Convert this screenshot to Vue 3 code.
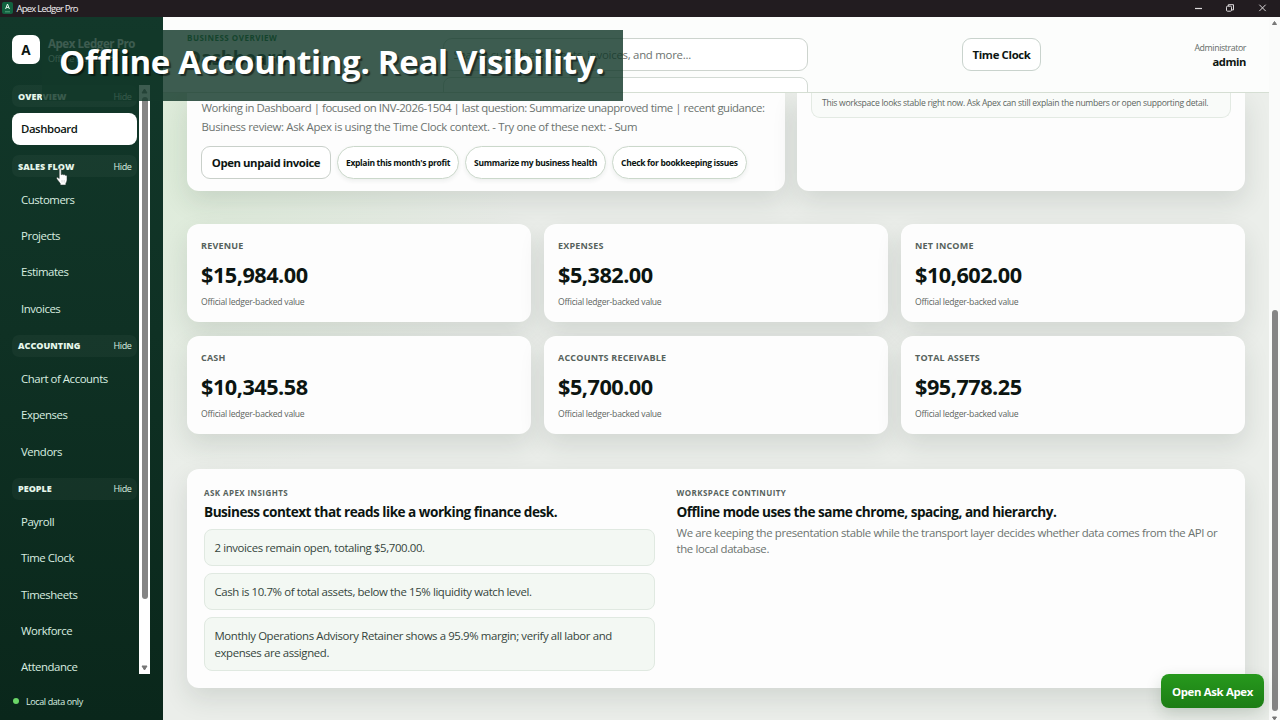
<script setup>
const groups = [
  { name: 'Overview', items: ['Dashboard'] },
  { name: 'Sales Flow', items: ['Customers', 'Projects', 'Estimates', 'Invoices'] },
  { name: 'Accounting', items: ['Chart of Accounts', 'Expenses', 'Vendors'] },
  { name: 'People', items: ['Payroll', 'Time Clock', 'Timesheets', 'Workforce', 'Attendance'] },
]
const prompts = ["Explain this month's profit", 'Summarize my business health', 'Check for bookkeeping issues']
const metrics = [
  { label: 'Revenue', value: '$15,984.00' },
  { label: 'Expenses', value: '$5,382.00' },
  { label: 'Net income', value: '$10,602.00' },
  { label: 'Cash', value: '$10,345.58' },
  { label: 'Accounts receivable', value: '$5,700.00' },
  { label: 'Total assets', value: '$95,778.25' },
]
const insights = [
  '2 invoices remain open, totaling $5,700.00.',
  'Cash is 10.7% of total assets, below the 15% liquidity watch level.',
  'Monthly Operations Advisory Retainer shows a 95.9% margin; verify all labor and expenses are assigned.',
]
</script>

<template>
  <div class="window">
    <div class="titlebar">
      <svg class="app-icon" viewBox="0 0 11 12">
        <rect width="11" height="12" rx="2" fill="#12613f" />
        <path d="M3.6 7 5.5 2l1.9 5M4.2 5.4h2.6" fill="none" stroke="#e8f5ee" stroke-width="1" />
        <path d="M3 9.8h5" stroke="#55a07d" stroke-width="1" />
      </svg>
      <span class="app-name">Apex Ledger Pro</span>
      <svg class="controls" viewBox="0 0 76 12" fill="none" stroke="#dedbdd">
        <path d="M2 6.500h7" stroke-width="1.2" />
        <rect x="33.500" y="4.2" width="5" height="5" rx="1" />
        <path d="M35.300 4V2.700h5.200v5.200h-1.700" />
        <path d="m66.300 2.700 6.400 6.400m0-6.400-6.400 6.400" />
      </svg>
    </div>

    <div class="body">
      <aside class="sidebar">
        <div class="brand">
          <div class="tile">A</div>
          <div>
            <div class="brand-name">Apex Ledger Pro</div>
            <div class="brand-sub">Offline workspace</div>
          </div>
        </div>
        <div class="nav-wrap">
          <nav>
            <section v-for="g in groups" :key="g.name">
              <header><b>{{ g.name }}</b><span>Hide</span></header>
              <a v-for="i in g.items" :key="i" :class="{ active: i === 'Dashboard' }">{{ i }}</a>
            </section>
          </nav>
          <div class="nav-scroll">
            <svg viewBox="0 0 11 12"><path d="M3 8h5L5.5 4z" fill="#777" stroke="#777" /></svg>
            <i></i>
            <svg viewBox="0 0 11 12"><path d="M3 4h5L5.5 8z" fill="#777" stroke="#777" /></svg>
          </div>
        </div>
        <div class="status"><i></i>Local data only</div>
      </aside>

      <main>
        <div class="topbar">
          <div class="heading">
            <div class="overline">Business overview</div>
            <h1>Dashboard</h1>
          </div>
          <div class="search-col">
            <div class="search">Search customers, clients, invoices, and more...</div>
            <div class="dropdown"></div>
          </div>
          <button class="clock">Time Clock</button>
          <div class="user"><span>Administrator</span><b>admin</b></div>
        </div>

        <div class="content">
          <div class="row">
            <section class="card assistant">
              <p><span class="tight">Working in Dashboard | focused on INV-2026-1504 | last question: Summarize unapproved time | recent guidance:</span><br>Business review: Ask Apex is using the Time Clock context. - Try one of these next: - Sum</p>
              <div class="chips">
                <button class="primary">Open unpaid invoice</button>
                <button v-for="p in prompts" :key="p">{{ p }}</button>
              </div>
            </section>
            <section class="card alerts">
              <div class="note">This workspace looks stable right now. Ask Apex can still explain the numbers or open supporting detail.</div>
            </section>
          </div>

          <div class="metrics">
            <section v-for="m in metrics" :key="m.label" class="card metric">
              <div class="label">{{ m.label }}</div>
              <div class="value">{{ m.value }}</div>
              <div class="hint">Official ledger-backed value</div>
            </section>
          </div>

          <section class="card bottom">
            <div class="col">
              <div class="eyebrow">Ask Apex insights</div>
              <h2>Business context that reads like a working finance desk.</h2>
              <div class="insights">
                <div v-for="t in insights" :key="t">{{ t }}</div>
              </div>
            </div>
            <div class="col">
              <div class="eyebrow">Workspace continuity</div>
              <h2>Offline mode uses the same chrome, spacing, and hierarchy.</h2>
              <p>We are keeping the presentation stable while the transport layer decides whether data comes from the API or the local database.</p>
            </div>
          </section>
        </div>
      </main>

      <div class="page-scroll">
        <svg viewBox="0 0 11 12"><path d="M3.5 7.5h4L5.5 4.5z" fill="#777" stroke="#777" /></svg>
        <i></i>
        <svg viewBox="0 0 11 12"><path d="M3.5 6h4L5.5 9z" fill="#777" stroke="#777" /></svg>
      </div>
    </div>

    <button class="ask">Open Ask Apex</button>
    <div class="banner">Offline Accounting. Real Visibility.</div>
    <svg class="pointer" viewBox="0 0 12 18">
      <path d="M3.2 1.6c0-1.5 2-1.5 2 0v5l.5.1c.2-.8 1.6-.7 1.8.3.4-.7 1.6-.5 1.8.4.6-.5 1.7-.1 1.7 1V12c0 1.5-.9 2.4-1.2 3.4V17H4.3v-1.500L1 11.200C0 9.800 1.100 8.800 2.200 9.700l1 .9z" fill="#fff" stroke="#26352f" stroke-width=".5" />
      <path d="M6 12v2.500M8.200 12v2.500" stroke="#999" stroke-width=".4" />
    </svg>
  </div>
</template>

<style>
body { overflow: hidden; }
</style>

<style scoped>
* { box-sizing: border-box; }
.window {
  position: relative; display: flex; flex-direction: column;
  width: 1280px; height: 720px; overflow: hidden;
  font-family: "Open Sans", "Noto Sans", sans-serif; font-size: 11.4px; color: #0c1511;
}
button { font-family: inherit; color: inherit; padding: 0; white-space: nowrap; }
h1, h2, p { margin: 0; }

.titlebar { flex: none; height: 17px; background: #221c20; display: flex; align-items: center; color: #f2f0f1; }
.app-icon { width: 11px; height: 12px; margin: -1px 3.5px 0 2px; }
.app-name { font-size: 9.5px; letter-spacing: -.77px; line-height: 16px; }
.controls { width: 76px; height: 12px; margin: -1px 11px 0 auto; }

.body { flex: 1; min-height: 0; display: flex; }
.sidebar {
  flex: none; width: 163px; display: flex; flex-direction: column;
  background: linear-gradient(#12382a, #0f3124 45%, #0a271b);
  color: #d9eee0;
}
.brand { height: 67px; padding: 18px 0 0 12px; display: flex; gap: 8px; }
.tile { width: 28px; height: 29px; border-radius: 7px; background: #fff; color: #0c1511; font-size: 13.5px; font-weight: 700; line-height: 31px; text-align: center; }
.brand-name { font-size: 11.5px; font-weight: 700; letter-spacing: -.42px; line-height: 16px; color: #fff; margin-top: 1px; white-space: nowrap; }
.brand-sub { font-size: 9px; letter-spacing: -.3px; line-height: 13px; }
.nav-wrap { height: 590px; display: flex; overflow: hidden; padding-left: 12px; }
nav { width: 125px; overflow: hidden; flex: none; }
nav section { display: flex; flex-direction: column; gap: 4.2px; margin-bottom: 10.2px; padding-top: 1px; margin-top: -1px; }
nav section:first-child { padding-top: 2px; }
nav header {
  height: 22px; margin-bottom: 2px; padding: 0 5.5px 0 6px; border-radius: 7px;
  background: rgba(255, 255, 255, .035);
  display: flex; justify-content: space-between; align-items: center;
}
nav header b { font-size: 9px; font-weight: 800; letter-spacing: .02px; text-transform: uppercase; color: #e6f6ea; }
nav header span { font-size: 9px; letter-spacing: -.37px; }
nav a { height: 32.1px; padding-left: 9px; line-height: 32.5px; letter-spacing: -.44px; border-radius: 8px; flex: none; }
nav a.active { background: #fff; color: #0c1511; font-weight: 600; }
.nav-scroll { width: 11px; margin: 1px 0 0 2px; height: 589px; background: #fff; display: flex; flex-direction: column; align-items: center; }
.nav-scroll svg { width: 11px; height: 12px; }
.nav-scroll i { width: 6px; height: 502px; border-radius: 3px; background: #858585; margin-bottom: auto; }
.status { display: flex; align-items: center; gap: 7.5px; padding-left: 12.5px; height: 26px; margin-top: 14px; font-size: 9px; letter-spacing: -.4px; }
.status i { width: 6px; height: 6px; border-radius: 50%; background: #6bd668; }

main {
  flex: 1; min-width: 0; display: flex; flex-direction: column;
  background:
    radial-gradient(ellipse 360px 340px at 0 130px, #dcebd8, rgba(226, 238, 224, 0)),
    #ebeeea;
}
.topbar {
  flex: none; height: 76px; overflow: hidden; display: flex; align-items: flex-start;
  background: #fcfdfc; border-bottom: 1px solid #d5ded3; padding-left: 24px; padding-right: 23px;
}
.heading { width: 255.5px; padding-top: 14px; }
.overline { font-size: 8px; line-height: 13px; font-weight: 700; letter-spacing: .5px; text-transform: uppercase; color: #1f7a3c; }
h1 { font-size: 19px; line-height: 27px; letter-spacing: -.4px; margin-top: 1px; color: #2d3833; }
.search-col { width: 365px; padding-top: 21px; }
.search { height: 33px; border: 1px solid #cdd4ce; border-radius: 9px; background: #fff; padding-left: 10px; line-height: 32px; letter-spacing: -.26px; color: #6c736f; }
.dropdown { height: 33px; border: 1px solid #d3dad4; border-radius: 8px; background: #fff; margin-top: 6px; }
.clock { width: 79px; height: 33px; margin: 21px 0 0 154.5px; border: 1px solid #c9d3cd; border-radius: 9px; background: #fff; font-size: 11.4px; font-weight: 700; letter-spacing: -.35px; }
.user { margin: 24.5px 0 0 auto; display: flex; flex-direction: column; align-items: flex-end; color: #646c68; }
.user span { font-size: 8.8px; line-height: 13px; letter-spacing: -.4px; }
.user b { font-size: 11.2px; line-height: 14px; letter-spacing: -.4px; color: #0c1511; }

.content { flex: 1; min-height: 0; overflow: hidden; padding: 0 24px; }
.card { background: #fdfdfd; border-radius: 12px; box-shadow: 0 11px 26px rgba(30, 50, 40, .12); }
.row { display: grid; grid-template-columns: 597.5px 1fr; gap: 12.5px; }
.row .card { height: 98px; border-radius: 0 0 12px 12px; }
.assistant { padding: 6px 0 0 14.5px; color: #6c736f; }
.assistant p { line-height: 18.7px; letter-spacing: -.34px; white-space: nowrap; }
.assistant .tight { letter-spacing: -.445px; }
.chips { display: flex; gap: 6px; margin-top: 9.6px; margin-left: -.5px; }
.chips button {
  height: 33px; padding: 0 8px; border: 1px solid #cbd8cb; border-radius: 17px; background: #fff;
  color: #0c1511; font-size: 8.5px; font-weight: 700; letter-spacing: -.32px; box-shadow: 0 2px 4px rgba(30, 60, 40, .07);
}
.chips .primary { width: 130px; border-color: #c9d0ca; border-radius: 9px; font-size: 11.4px; font-weight: 700; letter-spacing: -.44px; box-shadow: none; }
.alerts { padding: 0 14px; }
.note { height: 25px; border: 1px solid #e3eae3; border-top: 0; border-radius: 0 0 9px 9px; background: #f9fbf9; padding-left: 10px; line-height: 20px; font-size: 8.6px; letter-spacing: -.285px; color: #5d6661; white-space: nowrap; }

.metrics { display: grid; grid-template-columns: repeat(3, 1fr); gap: 13.5px 13px; margin-top: 32.5px; }
.metric { height: 98.5px; padding: 15px 14px 0; }
.label { font-size: 9px; line-height: 14px; font-weight: 700; letter-spacing: .2px; text-transform: uppercase; color: #56625c; }
.value { font-size: 21.7px; line-height: 30px; font-weight: 700; letter-spacing: -.5px; margin-top: 7px; }
.hint { font-size: 8.6px; line-height: 12px; letter-spacing: -.25px; color: #5d6661; margin-top: 6px; }

.bottom { margin-top: 34.8px; height: 219px; padding: 17px; display: grid; grid-template-columns: 451px 1fr; gap: 21.5px; }
.eyebrow { font-size: 8px; line-height: 13px; font-weight: 700; letter-spacing: .42px; text-transform: uppercase; color: #56625c; }
h2 { font-size: 13.6px; line-height: 19px; font-weight: 700; letter-spacing: -.5px; margin-top: 3.5px; white-space: nowrap; }
.insights { display: flex; flex-direction: column; gap: 7.5px; margin-top: 8px; }
.insights div { border: 1px solid #e0e9e1; border-radius: 8px; background: #f3f8f3; padding: 9.2px 40px 8.3px 9.5px; line-height: 17px; letter-spacing: -.38px; color: #35453c; }
.bottom p { margin-top: 3.7px; line-height: 15.7px; letter-spacing: -.37px; color: #6c736f; }

.page-scroll { flex: none; width: 11px; background: #fafbfa; display: flex; flex-direction: column; align-items: center; }
.page-scroll svg { width: 11px; height: 12px; flex: none; }
.page-scroll i { width: 6px; height: 401px; border-radius: 3px; background: #858585; margin-top: 281px; flex: none; }

.ask {
  position: absolute; right: 16px; bottom: 12px; width: 103px; height: 34px;
  border: 0; border-radius: 8px; background: linear-gradient(#27991d, #1c7d15);
  color: #fff; font-size: 11.4px; font-weight: 700; letter-spacing: -.34px; box-shadow: 0 6px 16px rgba(20, 60, 25, .18);
}
.banner {
  position: absolute; left: 42px; top: 30px; width: 581px; height: 71px; padding-left: 17px;
  background: rgba(18, 56, 42, .82); color: #fff; white-space: nowrap;
  font-size: 33px; line-height: 63px; font-weight: 700; letter-spacing: -.31px; text-shadow: 2px 2px 1px rgba(0, 0, 0, .5);
}
.pointer { position: absolute; left: 56px; top: 168px; width: 12px; height: 18px; }
</style>
